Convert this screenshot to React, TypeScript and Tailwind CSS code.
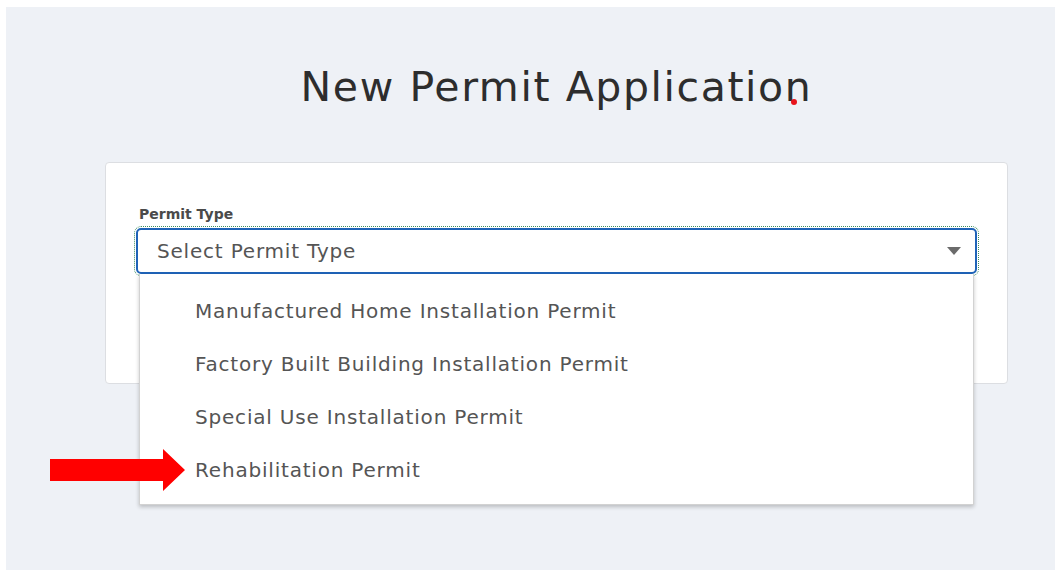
const permitTypes = [
  "Manufactured Home Installation Permit",
  "Factory Built Building Installation Permit",
  "Special Use Installation Permit",
  "Rehabilitation Permit",
];

function Caret() {
  return (
    <svg width="14" height="8" viewBox="0 0 14 8" className="shrink-0">
      <polygon points="0,0 14,0 7,8" fill="#6b6b6b" />
    </svg>
  );
}

function PointerArrow() {
  return (
    <svg
      width="136"
      height="42"
      viewBox="0 0 136 42"
      className="absolute left-[44px] top-[442px] z-20"
    >
      <polygon points="0,10 113,10 113,0 135,21 113,42 113,32 0,32" fill="#ff0000" />
    </svg>
  );
}

export default function App() {
  return (
    <div
      className="bg-white pt-[7px] pl-[6px] pb-[1px]"
      style={{ fontFamily: '"DejaVu Sans", "Liberation Sans", sans-serif' }}
    >
      <div className="relative h-[563px] bg-[#eef1f6] pl-[99px] pr-[47px]">
        {/* page heading */}
        <h1 className="pt-[56px] text-center text-[41px] leading-[48px] tracking-[1.6px] text-[#2d2d2d]">
          New Permit Applicatio
          <span className="relative inline-block">
            n
            <span className="absolute left-[6px] bottom-[6px] h-[6px] w-[6px] rounded-full bg-[#e8141c]" />
          </span>
        </h1>

        {/* form card */}
        <div className="mt-[51px] rounded-[4px] border border-[#dcdee2] bg-white px-[30px] pt-[43px] pb-[109px]">
          <label className="block pl-[3px] text-[14px] leading-[16px] font-semibold text-[#4a4a4a]">
            Permit Type
          </label>
          <div className="relative mt-[6px]">
            <div className="flex h-[46px] items-center justify-between rounded-[5px] border-2 border-[#1f63b8] pl-[19px] pr-[14px] outline-1 outline-dotted outline-[#3c8f62] outline-offset-[1px]">
              <span className="text-[20px] tracking-[0.8px] text-[#555]">Select Permit Type</span>
              <Caret />
            </div>

            {/* open options list */}
            <ul className="absolute left-[3px] right-[3px] top-[46px] z-10 border border-t-0 border-[#d2d2d2] bg-white pt-[10px] pb-[8px] shadow-[0_2px_4px_rgba(0,0,0,0.22)]">
              {permitTypes.map((t) => (
                <li
                  key={t}
                  className="flex h-[53px] items-center pl-[55px] text-[20px] tracking-[0.8px] text-[#555]"
                >
                  {t}
                </li>
              ))}
            </ul>
          </div>
        </div>

        <PointerArrow />
      </div>
    </div>
  );
}
